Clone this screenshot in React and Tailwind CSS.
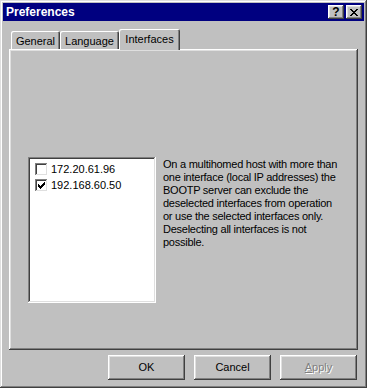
import React, { useState } from "react";

const raised =
  "shadow-[inset_-1px_-1px_#404040,inset_1px_1px_#ffffff,inset_-2px_-2px_#808080,inset_2px_2px_#dfdfdf]";
const sunken =
  "shadow-[inset_-1px_-1px_#ffffff,inset_1px_1px_#808080,inset_-2px_-2px_#dfdfdf,inset_2px_2px_#404040]";

const CheckItem = ({ label, checked, onToggle }) => (
  <div className="flex items-center h-[16px] cursor-default" onClick={onToggle}>
    <div className={`w-[13px] h-[13px] bg-white ${sunken} flex items-center justify-center`}>
      {checked && (
        <svg width="7" height="7" viewBox="0 0 7 7" className="block">
          <path d="M0 2h1v1h1v1h1V3h1V2h1V1h1V0h1v3H6v1H5v1H4v1H3v1H2V6H1V5H0z" fill="#000" />
        </svg>
      )}
    </div>
    <span className="ml-[3px] text-black">{label}</span>
  </div>
);

const Tab = ({ label, active, width }) => (
  <div
    className={`relative flex justify-center rounded-t-[2px] bg-[#c0c0c0] shadow-[inset_1px_1px_#ffffff,inset_-1px_0_#404040,inset_-2px_0_#808080] ${
      active ? "h-[21px] -mb-[1px] z-10 pt-[4px]" : "h-[18px] pt-[4px]"
    }`}
    style={{ width }}
  >
    {label}
  </div>
);

const Button = ({ children, disabled }) => (
  <button
    type="button"
    className={`w-[77px] h-[25px] bg-[#c0c0c0] ${raised} flex items-center justify-center ${
      disabled ? "text-[#808080] [text-shadow:1px_1px_#ffffff]" : "text-black"
    }`}
  >
    {children}
  </button>
);

export default function App() {
  const [items, setItems] = useState([
    { ip: "172.20.61.96", on: false },
    { ip: "192.168.60.50", on: true },
  ]);

  const toggle = (i) =>
    setItems(items.map((it, j) => (j === i ? { ...it, on: !it.on } : it)));

  return (
    <div
      className={`w-[367px] h-[388px] bg-[#c0c0c0] p-[3px] flex flex-col text-[11px] leading-[13px] text-black shadow-[inset_-1px_-1px_#404040,inset_1px_1px_#dfdfdf,inset_-2px_-2px_#808080,inset_2px_2px_#ffffff]`}
      style={{ fontFamily: '"Liberation Sans", Arial, sans-serif' }}
    >
      {/* title bar */}
      <div className="h-[18px] bg-[#000080] flex items-center justify-between pl-[3px] pr-[2px]">
        <span className="text-white font-bold text-[12px]">Preferences</span>
        <div className="flex gap-[2px]">
          <div className={`w-[16px] h-[14px] bg-[#c0c0c0] ${raised} flex items-center justify-center font-bold text-[12px]`}>
            ?
          </div>
          <div className={`w-[16px] h-[14px] bg-[#c0c0c0] ${raised} flex items-center justify-center`}>
            <svg width="8" height="7" viewBox="0 0 8 7">
              <path d="M0 0h2v1h1v1h2V1h1V0h2v1H7v1H6v1H5v1h1v1h1v1h1v1H6V6H5V5H3v1H2v1H0V6h1V5h1V4h1V3H2V2H1V1H0z" fill="#000" />
            </svg>
          </div>
        </div>
      </div>

      {/* tabs */}
      <div className="px-[6px] mt-[8px]">
        <div className="flex items-end h-[20px] pl-[2px]">
          <Tab label="General" width={49} />
          <Tab label="Language" width={59} />
          <Tab label="Interfaces" width={61} active />
        </div>

        {/* panel */}
        <div className={`h-[301px] bg-[#c0c0c0] ${raised} pl-[19px] pt-[108px] flex gap-[7px]`}>
          <div className={`w-[128px] h-[146px] bg-white ${sunken} pl-[7px] pt-[4px]`}>
            {items.map((it, i) => (
              <CheckItem key={it.ip} label={it.ip} checked={it.on} onToggle={() => toggle(i)} />
            ))}
          </div>
          <p className="pt-[1px] whitespace-nowrap tracking-[-0.25px]">
            On a multihomed host with more than
            <br />
            one interface (local IP addresses) the
            <br />
            BOOTP server can exclude the
            <br />
            deselected interfaces from operation
            <br />
            or use the selected interfaces only.
            <br />
            Deselecting all interfaces is not
            <br />
            possible.
          </p>
        </div>
      </div>

      {/* buttons */}
      <div className="flex justify-end gap-[9px] mt-[5px] pr-[7px]">
        <Button>OK</Button>
        <Button>Cancel</Button>
        <Button disabled>
          <span>
            <span className="underline">A</span>pply
          </span>
        </Button>
      </div>
    </div>
  );
}
